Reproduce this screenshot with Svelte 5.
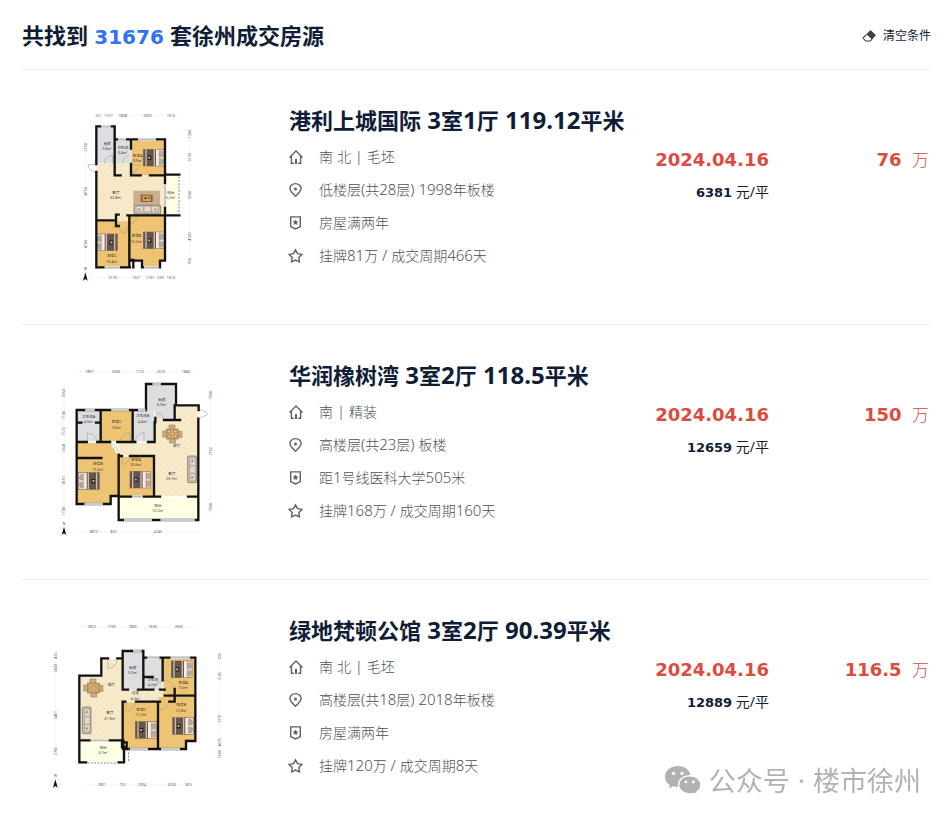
<script lang="ts">
  type Plan = {
    viewBox: string;
    floors: [string, string][];
    walls: string;
    windows: string;
    doors: string;
    rails?: string;
    beds: [number, number, boolean][];
    sofa: [number, number, boolean];
    table?: [number, number];
    rug?: [number, number];
    labels: [number, number, string, string][];
    guides: string;
    dims: [number, number, string, boolean][];
    compass: [number, number];
  };

  type House = {
    title: string;
    facing: string;
    floor: string;
    feature: string;
    deal: string;
    date: string;
    price: string;
    unitPrice: string;
    plan: Plan;
  };

  const total = 31676;

  const houses: House[] = [
    {
      title: '港利上城国际 3室1厅 119.12平米',
      facing: '南 北 | 毛坯',
      floor: '低楼层(共28层) 1998年板楼',
      feature: '房屋满两年',
      deal: '挂牌81万 / 成交周期466天',
      date: '2024.04.16',
      price: '76',
      unitPrice: '6381',
      plan: {
        viewBox: '-144 6 690 570',
        floors: [
          ['tile', 'M80 190H182V226H282V344H176V378H138V360H80Z'],
          ['grey', 'M82 82H132V190H82ZM134 120H182V190H134Z'],
          ['wood', 'M184 122H282V226H184ZM82 364H178V500H82ZM180 346H282V480H270V502H216V480H180Z'],
          ['balcony', 'M286 228H323V344H286Z']
        ],
        walls:
          'M134 118V79H79V192M79 216V502H180M180 480H190V502M182 482H216V502H270V482H285V346H328M285 320V346M285 252V224H328M285 226V118H134M134 118V226H152M183 118V146M183 192V226H212M240 226H285M79 361H138V378H146M138 361V344H146M172 346H285M178 346V502',
        windows: 'M94 79H122M144 118H168M204 118H258M104 502H150M222 502H266M285 252V320',
        doors: 'M79 194H54A26 26 0 0 0 79 217M103 190A25 25 0 0 1 128 166V190M158 190A25 25 0 0 1 180 166M183 194H208A25 25 0 0 1 183 219M146 378A24 24 0 0 0 168 400L172 378M176 348H200A24 24 0 0 1 176 372',
        rails: 'M327 230V344',
        beds: [[220, 148, false], [82, 402, true], [220, 396, false]],
        sofa: [192, 316, false],
        rug: [190, 272],
        labels: [
          [112, 134, '厨房', '5.6m²'],
          [158, 146, '卫生间', '3.4m²'],
          [203, 170, '卧室A', '9.9m²'],
          [138, 282, '客厅', '32.8m²'],
          [302, 282, '阳台', '5.2m²'],
          [200, 412, '卧室B', '15.2m²'],
          [126, 472, '卧室C', '13.4m²']
        ],
        guides: 'M84 46H324M46 98V504M358 84V502M82 532H322',
        dims: [
          [86, 46, '551', false], [115, 46, '1157', false], [158, 46, '1808', false], [232, 46, '3300', false], [303, 46, '1613', false],
          [46, 142, '2750', true], [46, 274, '4750', true], [46, 432, '4100', true],
          [358, 102, '1200', true], [358, 172, '3150', true], [358, 286, '3600', true], [358, 410, '4100', true], [358, 484, '700', true],
          [128, 532, '3170', false], [198, 532, '1027', false], [240, 532, '1737', false], [271, 532, '539', false], [303, 532, '1613', false]
        ],
        compass: [46, 530]
      }
    },
    {
      title: '华润橡树湾 3室2厅 118.5平米',
      facing: '南 | 精装',
      floor: '高楼层(共23层) 板楼',
      feature: '距1号线医科大学505米',
      deal: '挂牌168万 / 成交周期160天',
      date: '2024.04.16',
      price: '150',
      unitPrice: '12659',
      plan: {
        viewBox: '-84 -9 690 570',
        floors: [
          ['tile', 'M376 140H444V408H314V286H206V248H314V176H376Z'],
          ['grey', 'M84 152H150V244H84ZM250 152H312V244H250ZM292 76H374V176H316V152H292Z'],
          ['wood', 'M154 152H246V244H154ZM84 248H180L204 286V408H182V430H84ZM208 290H310V408H208Z'],
          ['balcony', 'M208 412H442V478H208Z']
        ],
        walls:
          'M80 150V432H182V408H206V480H445V176M80 150H288V72H378V136H446V150M152 150V244M248 150V244M80 246H110M142 246H180M202 246H256M294 246H314V186M342 180H390M374 136V180M316 174V186M82 294H154M206 284V408M206 288H216M240 288H312V410M206 410H330M414 410H445M84 188H94M138 188H150',
        windows: 'M106 150H134M184 150H236M264 150H286M308 72H332M104 432H158M222 480H306M332 480H434M246 410H278',
        doors: 'M446 150A27 27 0 0 1 473 164L446 175M112 246V220A26 26 0 0 1 140 246M210 244A28 28 0 0 1 240 218V244M256 244A26 26 0 0 1 282 218V244M316 158A26 26 0 0 1 342 180M180 250A27 27 0 0 1 204 276M216 290V314A26 26 0 0 0 240 290',
        beds: [[88, 338, true], [240, 334, false]],
        sofa: [412, 288, true],
        table: [367, 222],
        labels: [
          [116, 174, '卫生间A', '4.9m²'],
          [200, 190, '卧室C', '7.0m²'],
          [278, 172, '卫生间B', '4.4m²'],
          [336, 122, '厨房', '6.9m²'],
          [144, 316, '卧室B', '17.2m²'],
          [258, 302, '卧室A', '10.0m²'],
          [380, 260, '餐厅', ''],
          [366, 344, '客厅', '29.7m²'],
          [324, 440, '阳台', '12.2m²']
        ],
        guides: 'M84 34H440M42 76V474M481 76V476M84 515H440',
        dims: [
          [118, 34, '1897', false], [198, 34, '3006', false], [270, 34, '1172', false], [332, 34, '2310', false], [408, 34, '1840', false],
          [42, 100, '2050', true], [42, 166, '1100', true], [42, 214, '1572', true], [42, 266, '1264', true], [42, 362, '3870', true], [42, 454, '1700', true],
          [481, 106, '1800', true], [481, 274, '7762', true], [481, 442, '1800', true],
          [130, 515, '3870', false], [190, 515, '820', false], [324, 515, '4740', false]
        ],
        compass: [42, 513]
      }
    },
    {
      title: '绿地梵顿公馆 3室2厅 90.39平米',
      facing: '南 北 | 毛坯',
      floor: '高楼层(共18层) 2018年板楼',
      feature: '房屋满两年',
      deal: '挂牌120万 / 成交周期8天',
      date: '2024.04.16',
      price: '116.5',
      unitPrice: '12889',
      plan: {
        viewBox: '-54 -9 690 570',
        floors: [
          ['tile', 'M122 184H190V132H248V226H402V260H248V376H122Z'],
          ['grey', 'M250 110H308V224H250ZM312 130H366V224H312Z'],
          ['wood', 'M370 132H462V240H370ZM250 262H352V402H250ZM356 246H464V378H438V402H356Z'],
          ['balcony', 'M122 380H258V440H122Z']
        ],
        walls:
          'M138 442H118V182H184V130H204M232 130H248V108H310V128H466V378H438V402H250V380M118 376H152M206 376H250M248 108V224H264M294 224H340M310 126V224M310 186H338M368 128V196M360 224H374M374 242H466M404 222V260H388M248 260V400M248 260H256M288 260H360M354 260V402M236 442H252V402M246 382H260V396H246Z',
        windows: 'M280 108H304M322 128H358M392 128H450M270 402H324M364 402H420M152 376H206',
        doors: 'M204 132V160A28 28 0 0 0 232 134M258 262V286A28 28 0 0 0 286 262M340 224A26 26 0 0 1 364 200M372 196A30 30 0 0 1 402 222M360 284A26 26 0 0 0 386 262',
        rails: 'M142 444H234M266 402V442',
        beds: [[394, 138, false], [286, 320, false], [398, 308, false]],
        sofa: [126, 276, true],
        table: [160, 219],
        labels: [
          [214, 212, '餐厅', ''],
          [278, 162, '厨房', '5.2m²'],
          [338, 198, '卫生间', '4.2m²'],
          [430, 206, '卧室A', '7.5m²'],
          [286, 238, '过道', '4.2m²'],
          [210, 298, '客厅', '21.9m²'],
          [304, 288, '卧室C', '11.2m²'],
          [424, 274, '卧室B', '12.3m²'],
          [190, 402, '阳台', '6.7m²']
        ],
        guides: 'M122 36H463M46 112V438M538 112V436M138 510H462',
        dims: [
          [154, 36, '1850', false], [215, 36, '1705', false], [278, 36, '1805', false], [338, 36, '1630', false], [416, 36, '2600', false],
          [46, 122, '425', true], [46, 160, '1400', true], [46, 300, '5401', true], [46, 408, '2705', true],
          [538, 124, '505', true], [538, 184, '3105', true], [538, 310, '2731', true], [538, 382, '4575', true], [538, 418, '1800', true],
          [186, 510, '2851', false], [248, 510, '792', false], [306, 510, '2904', false], [394, 510, '3258', false], [446, 510, '825', false]
        ],
        compass: [46, 506]
      }
    }
  ];

  // Latin runs are set one step larger than the Chinese around them
  function runs(text: string) {
    return text.split(/([\x20-\x7e]+)/).filter(Boolean);
  }
</script>

{#snippet mixed(text: string)}
  {#each runs(text) as run}{#if /[\x20-\x7e]/.test(run)}<span class="latin">{run}</span>{:else}{run}{/if}{/each}
{/snippet}

{#snippet floorPlan(plan: Plan, name: string)}
  <svg class="plan" viewBox={plan.viewBox} role="img" aria-label={name}>
    <defs>
      <pattern id="planks" width="48" height="12" patternUnits="userSpaceOnUse">
        <rect width="48" height="12" fill="#efc474" />
        <path d="M0 0H48M10 0V6M34 6V12M0 6H48" stroke="#e6b965" stroke-width="1" />
      </pattern>
      <pattern id="tiles" width="18" height="18" patternUnits="userSpaceOnUse">
        <rect width="18" height="18" fill="#f7eaca" />
        <path d="M0 0L18 18M18 0L0 18" stroke="#f2e2b8" stroke-width="1" />
      </pattern>
    </defs>
    {#each plan.floors as [kind, d]}
      <path class={kind} {d} />
    {/each}
    {#if plan.rug}
      <g transform="translate({plan.rug[0]} {plan.rug[1]})">
        <rect width="80" height="44" fill="#c9ae94" />
        <rect x="22" y="12" width="36" height="22" fill="#8d6238" />
        <rect x="28" y="15" width="24" height="16" fill="#d9a860" />
        <path d="M32 20H40V26H34ZM44 18H48V24H44Z" fill="#5c3b22" />
      </g>
    {/if}
    {#each plan.beds as [x, y, flipped]}
      <g transform={flipped ? `translate(${x + 60} ${y}) scale(-1 1)` : `translate(${x} ${y})`}>
        <rect width="62" height="50" fill="#e9dccb" stroke="#6c5a4e" stroke-width="1.5" />
        <rect width="40" height="50" fill="#65544b" />
        <path d="M8 0V50M33 0V50" stroke="#cbbdae" stroke-width="4" />
        <rect x="38" y="1" width="6" height="48" fill="#f7f2e8" />
        <path d="M13 19H24V32H13Z" fill="#28211e" />
        <path d="M15 22L21 23L19 29L15 27Z" fill="#ded5c9" />
        <path d="M48 5L58 7V21L48 23ZM48 28L58 30V44L48 46Z" fill="#b9aa9c" stroke="#837164" />
        <path d="M57 10L62 16L57 22ZM57 29L62 35L57 41Z" fill="#87a7bf" />
      </g>
    {/each}
    <g transform={plan.sofa[2] ? `translate(${plan.sofa[0] + 27} ${plan.sofa[1]}) rotate(90)` : `translate(${plan.sofa[0]} ${plan.sofa[1]})`}>
      <rect width="80" height="26" rx="3" fill="#cdbdae" stroke="#6e6057" stroke-width="2" />
      <path d="M7 3H28V19H7ZM30 3H51V19H30ZM53 3H73V19H53Z" fill="#e4d9cc" stroke="#8f7d6f" />
      <path d="M10 13L16 8L20 15ZM61 8L69 12L63 17Z" fill="#9b7f70" />
    </g>
    {#if plan.table}
      <g transform="translate({plan.table[0]} {plan.table[1]})" stroke="#8a6a48" stroke-width="1.5">
        <path d="M-10 -27H8V-17H-10ZM-8 17H10V27H-8ZM-29 -9H-20V9H-29ZM20 -8H29V10H20Z" fill="#c9b193" />
        <rect x="-18" y="-15" width="36" height="30" fill="#d49c50" />
        <path d="M0 -15V15M-18 0H18" stroke="#edcb92" />
        <path d="M-13 -11H-5V-4H-13ZM5 -11H13V-4H5ZM-13 4H-5V11H-13ZM5 4H13V11H5Z" fill="#d6ddd2" />
      </g>
    {/if}
    <path class="door" d={plan.doors} />
    <path class="wall" d={plan.walls} />
    <path class="window" d={plan.windows} />
    <path class="window-line" d={plan.windows} />
    {#if plan.rails}
      <path class="rail" d={plan.rails} />
    {/if}
    {#each plan.labels as [x, y, room, area]}
      <text {x} {y}>{room}</text>
      {#if area}
        <text {x} y={y + 16}>{area}</text>
      {/if}
    {/each}
    <path class="guide" d={plan.guides} />
    {#each plan.dims as [x, y, size, vertical]}
      <g transform={`translate(${x} ${y})${vertical ? ' rotate(-90)' : ''}`}>
        <rect x="-14" y="-6" width="28" height="12" fill="#fff" />
        <text class="dim" y="4">{size}</text>
      </g>
    {/each}
    <g transform="translate({plan.compass[0]} {plan.compass[1]})">
      <circle r="15" fill="#fff" stroke="#ccc" />
      <path d="M0 -13L7 12L0 7L-7 12Z" fill="#111" />
      <text y="-19">N</text>
    </g>
  </svg>
{/snippet}

<main class="page">
  <header class="header">
    <h1>{@render mixed('共找到 ')}<em>{total}</em>{@render mixed(' 套徐州成交房源')}</h1>
    <button class="clear" type="button">
      <svg width="14" height="12" viewBox="0 0 14 12" aria-hidden="true">
        <path d="M8.5 0L14 5.2L10 9.4L4.4 4.2Z" fill="#394043" />
        <path d="M4.5 4.4L1 8L3.6 11H8.3L10 9.2" fill="none" stroke="#394043" stroke-width="1.1" />
      </svg>
      清空条件
    </button>
  </header>

  <ul class="list">
    {#each houses as house}
      <li class="row">
        {@render floorPlan(house.plan, house.title)}

        <div class="info">
          <h2><a href="#house">{@render mixed(house.title)}</a></h2>
          <p>
            <svg class="icon" viewBox="0 0 14 14" aria-hidden="true">
              <path d="M0.5 7.4L7 0.9L13.5 7.4M2.4 5.8V13.2H4.8M11.6 5.8V13.2H9.2" />
              <path class="solid" d="M6 9H8V14H6Z" />
            </svg>
            <span>{@render mixed(house.facing)}</span>
          </p>
          <p>
            <svg class="icon" viewBox="0 0 14 14" aria-hidden="true">
              <path d="M6.5 13.3C3.2 10.2 0.9 8.2 0.9 5.6A5.6 5 0 0 1 12.1 5.6C12.1 8.2 9.8 10.2 6.5 13.3Z" />
              <circle class="solid" cx="6.5" cy="5.9" r="1.5" />
            </svg>
            <span>{@render mixed(house.floor)}</span>
          </p>
          <p>
            <svg class="icon" viewBox="0 0 14 14" aria-hidden="true">
              <path d="M1.7 0.9H11.3V10.6L6.5 12.9L1.7 10.6Z" />
              <path class="solid" d="M6.5 3.4L7.4 5.3L9.4 5.5L7.9 6.9L8.3 8.9L6.5 7.9L4.7 8.9L5.1 6.9L3.6 5.5L5.6 5.3Z" />
            </svg>
            <span>{@render mixed(house.feature)}</span>
          </p>
          <p>
            <svg class="icon" viewBox="0 0 14 14" aria-hidden="true">
              <path d="M6.5 0.9L8.5 4.6L12.9 5.4L9.8 8.4L10.4 12.9L6.5 11.1L2.6 12.9L3.2 8.4L0.1 5.4L4.5 4.6Z" />
            </svg>
            <span>{@render mixed(house.deal)}</span>
          </p>
        </div>

        <div class="date">
          <strong>{house.date}</strong>
          <span class="unit-price"><b>{house.unitPrice}</b> 元/平</span>
        </div>

        <div class="price"><strong>{house.price}</strong> 万</div>
      </li>
    {/each}
  </ul>

  <div class="watermark">
    <svg width="36" height="30" viewBox="0 0 36 30" aria-hidden="true">
      <path fill="#b2b2b2" d="M13 0C5.8 0 0 4.7 0 10.8C0 14.3 1.8 17.3 4.8 19.2L4 22.4L8 20.3C9.6 20.8 11.3 21.1 13 21.1C20.2 21.1 25.4 16.7 25.4 10.6C25.4 4.6 20.2 0 13 0Z" />
      <path fill="#b2b2b2" stroke="#fff" stroke-width="1.4" d="M24.6 9.7C31 9.7 36 13.7 36 18.8C36 21.8 34.4 24.3 31.9 26L32.5 29L29 27.3C27.6 27.8 26.2 28 24.6 28C18.3 28 13.6 24 13.6 18.8C13.6 13.7 18.3 9.7 24.6 9.7Z" />
      <circle cx="8.6" cy="7.4" r="1.7" fill="#fff" />
      <circle cx="17" cy="7.4" r="1.7" fill="#fff" />
      <circle cx="21" cy="16" r="1.4" fill="#fff" />
      <circle cx="28.3" cy="16" r="1.4" fill="#fff" />
    </svg>
    <span>公众号</span>
    <span>·</span>
    <span>楼市徐州</span>
  </div>
</main>

<style>
:global(body) {
  background: #fff;
}

.page {
  padding: 0 20px 0 22px;
  font-family: "Noto Sans", "Noto Sans CJK SC", sans-serif;
  font-size: 14px;
  color: #101d37;
}

.header {
  display: flex;
  align-items: center;
  justify-content: space-between;
  padding: 19px 0 16px;
  border-bottom: 1px solid #eee;
}

h1,
h2 {
  margin: 0;
  font-size: 22px;
  font-weight: 700;
  white-space: nowrap;
}

h1 {
  line-height: 32px;
}

h1 em {
  font-family: "DejaVu Sans", sans-serif;
  font-size: 20px;
  font-style: normal;
  color: #3072f6;
}

h1 .latin,
h2 .latin {
  font-size: 24px;
}

.clear {
  display: flex;
  align-items: center;
  gap: 7px;
  padding: 0;
  border: 0;
  background: none;
  font-family: inherit;
  font-size: 12px;
  line-height: 16px;
  color: #101d37;
  cursor: pointer;
}

.list {
  margin: 0;
  padding: 0;
  list-style: none;
}

.row {
  display: grid;
  grid-template-columns: 230px minmax(0, 1fr) auto 160px;
  padding: 32px 2px 32px 0;
  border-bottom: 1px solid #eee;
}

.row:last-child {
  padding-bottom: 0;
  border-bottom: 0;
}

.plan {
  display: block;
  width: 100%;
  height: 190px;
}

.plan .tile {
  fill: url(#tiles);
}

.plan .wood {
  fill: url(#planks);
}

.plan .grey {
  fill: #dcdedf;
}

.plan .balcony {
  fill: #fdfee3;
}

.plan .wall {
  fill: none;
  stroke: #111;
  stroke-width: 7;
  stroke-linecap: square;
}

.plan .window {
  stroke: #fff;
  stroke-width: 8;
}

.plan .window-line {
  stroke: #bbb;
  stroke-width: 5;
}

.plan .door {
  fill: none;
  stroke: #aaa69c;
  stroke-width: 2;
}

.plan .rail {
  fill: none;
  stroke: #888;
  stroke-width: 3;
  stroke-dasharray: 6 4;
}

.plan .guide {
  fill: none;
  stroke: #ddd;
  stroke-width: 1;
}

.plan text {
  font-size: 11px;
  text-anchor: middle;
  fill: #333;
}

.plan .dim {
  fill: #555;
}

.info {
  padding: 3px 0 0 37px;
}

h2 {
  margin-bottom: 5px;
  line-height: 30px;
}

h2 a {
  color: inherit;
  text-decoration: none;
}

.info p {
  display: flex;
  align-items: center;
  gap: 16px;
  margin: 0;
  line-height: 33px;
  font-weight: 300;
  color: #4c5256;
  white-space: nowrap;
}

.info p .latin {
  font-size: 15px;
}

.icon {
  flex-shrink: 0;
  width: 14px;
  height: 14px;
  fill: none;
  stroke: #5c6266;
  stroke-width: 1.4;
  overflow: visible;
}

.icon .solid {
  fill: #5c6266;
  stroke: none;
}

.date {
  display: flex;
  flex-direction: column;
  align-items: flex-end;
  padding-top: 42px;
  line-height: 32px;
}

.date strong,
.price strong {
  font-family: "DejaVu Sans", sans-serif;
  font-size: 18px;
  font-weight: 700;
  color: #db4c3f;
}

.unit-price b {
  font-family: "DejaVu Sans", sans-serif;
  font-size: 13px;
}

.price {
  padding-top: 42px;
  font-size: 17px;
  font-weight: 300;
  line-height: 32px;
  text-align: right;
  color: #db4c3f;
}

.price strong {
  margin-right: 6px;
}

.watermark {
  position: fixed;
  right: 30px;
  bottom: 20px;
  display: flex;
  align-items: center;
  gap: 8px;
  font-size: 27px;
  line-height: 36px;
  color: #b2b2b2;
}
</style>
